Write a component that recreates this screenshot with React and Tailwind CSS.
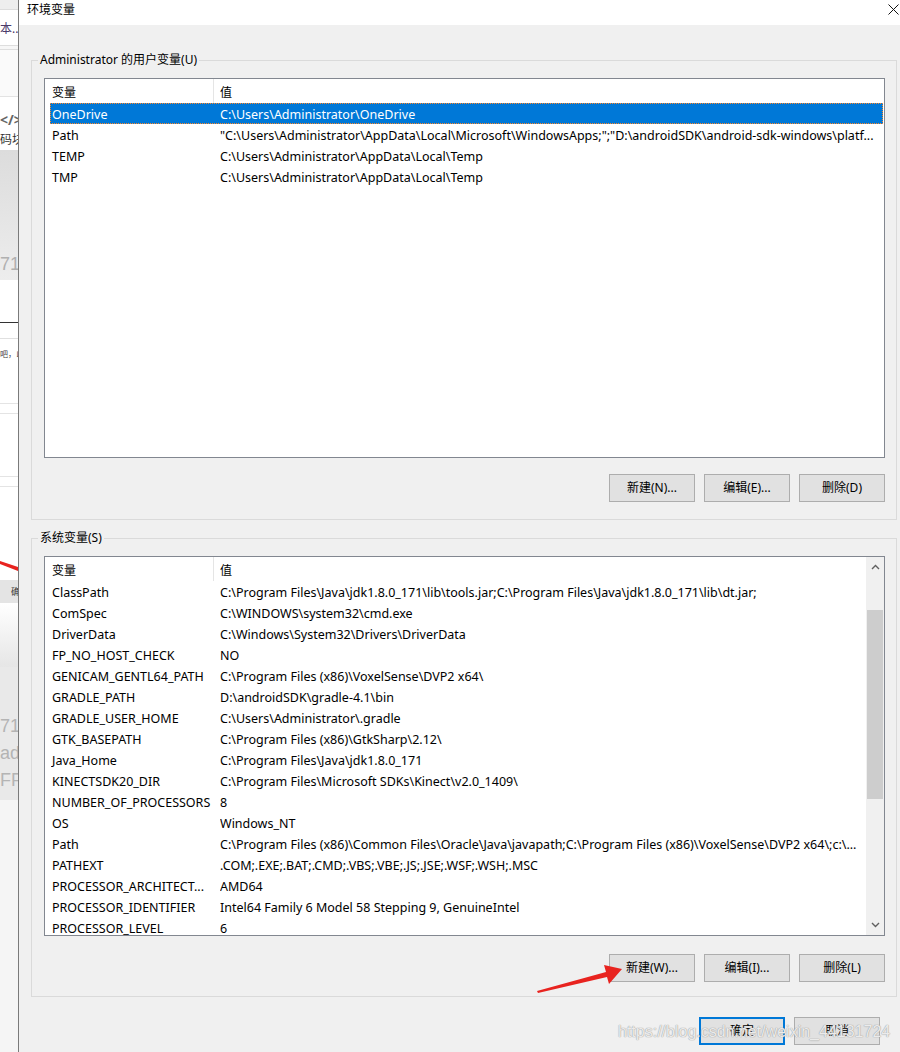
import React from "react";

const F = "font-['Segoe_UI','Noto_Sans','Noto_Sans_CJK_SC',sans-serif]";

const userVars = [
  ["OneDrive", "C:\\Users\\Administrator\\OneDrive"],
  ["Path", "\"C:\\Users\\Administrator\\AppData\\Local\\Microsoft\\WindowsApps;\";\"D:\\androidSDK\\android-sdk-windows\\platf..."],
  ["TEMP", "C:\\Users\\Administrator\\AppData\\Local\\Temp"],
  ["TMP", "C:\\Users\\Administrator\\AppData\\Local\\Temp"],
];

const sysVars = [
  ["ClassPath", "C:\\Program Files\\Java\\jdk1.8.0_171\\lib\\tools.jar;C:\\Program Files\\Java\\jdk1.8.0_171\\lib\\dt.jar;"],
  ["ComSpec", "C:\\WINDOWS\\system32\\cmd.exe"],
  ["DriverData", "C:\\Windows\\System32\\Drivers\\DriverData"],
  ["FP_NO_HOST_CHECK", "NO"],
  ["GENICAM_GENTL64_PATH", "C:\\Program Files (x86)\\VoxelSense\\DVP2 x64\\"],
  ["GRADLE_PATH", "D:\\androidSDK\\gradle-4.1\\bin"],
  ["GRADLE_USER_HOME", "C:\\Users\\Administrator\\.gradle"],
  ["GTK_BASEPATH", "C:\\Program Files (x86)\\GtkSharp\\2.12\\"],
  ["Java_Home", "C:\\Program Files\\Java\\jdk1.8.0_171"],
  ["KINECTSDK20_DIR", "C:\\Program Files\\Microsoft SDKs\\Kinect\\v2.0_1409\\"],
  ["NUMBER_OF_PROCESSORS", "8"],
  ["OS", "Windows_NT"],
  ["Path", "C:\\Program Files (x86)\\Common Files\\Oracle\\Java\\javapath;C:\\Program Files (x86)\\VoxelSense\\DVP2 x64\\;c:\\..."],
  ["PATHEXT", ".COM;.EXE;.BAT;.CMD;.VBS;.VBE;.JS;.JSE;.WSF;.WSH;.MSC"],
  ["PROCESSOR_ARCHITECT...", "AMD64"],
  ["PROCESSOR_IDENTIFIER", "Intel64 Family 6 Model 58 Stepping 9, GenuineIntel"],
  ["PROCESSOR_LEVEL", "6"],
];

function Header() {
  return (
    <div className="flex h-[24px] shrink-0 bg-white pt-[3px]">
      <div className="w-[169px] pl-[7px] flex items-center border-r border-[#e5e5e5] -mt-[3px] pt-[3px]">变量</div>
      <div className="flex-1 pl-[6px] flex items-center">值</div>
    </div>
  );
}

function Row({ name, value, selected }) {
  return (
    <div
      className={
        selected
          ? "flex h-[21px] shrink-0 items-center pt-[2px] ml-[5px] mr-[1px] bg-[#0078d7] text-white border border-dotted border-[#ff8728] text-[12.5px]"
          : "flex h-[21px] shrink-0 items-center pt-[2px] ml-[5px] mr-[1px] border border-transparent text-[12.5px]"
      }
    >
      <div className="w-[169px] pl-[1px] whitespace-nowrap overflow-hidden">{name}</div>
      <div className="flex-1 whitespace-nowrap overflow-hidden">{value}</div>
    </div>
  );
}

function Btn({ children }) {
  return (
    <div className="w-[86px] h-[28px] bg-[#e1e1e1] border border-[#adadad] flex items-center justify-center">
      {children}
    </div>
  );
}

function Chevron({ up }) {
  return (
    <svg width="9" height="6" viewBox="0 0 9 6">
      <path
        d={up ? "M1 5 L4.5 1.5 L8 5" : "M1 1 L4.5 4.5 L8 1"}
        fill="none"
        stroke="#606060"
        strokeWidth="1.4"
      />
    </svg>
  );
}

function LeftStrip() {
  return (
    <div className="w-[18px] shrink-0 flex flex-col overflow-hidden bg-[#f4f4f4] text-[12px] leading-[16px]">
      <div className="h-[10px] shrink-0 bg-[#eeeeee] border-b border-[#dddddd]" />
      <div className="h-[35px] shrink-0 bg-white flex items-center whitespace-nowrap text-[#4b3a6b] pt-[2px]">本...</div>
      <div className="h-[5px] shrink-0 border-t border-b border-[#dedede] bg-[#f7f7f7]" />
      <div className="h-[47px] shrink-0 bg-[#fafafa] border-b border-[#e3e3e3]" />
      <div className="h-[53px] shrink-0 bg-white flex flex-col whitespace-nowrap text-[#555] pt-[13px] leading-[20px]">
        <div className="font-bold text-[14px] text-[#666]">&lt;/&gt;</div>
        <div className="text-[#333]">码块</div>
      </div>
      <div className="h-[130px] shrink-0 bg-gradient-to-b from-[#dcdcdc] to-[#ededed] flex items-end pb-[8px] text-[18px] text-[#b0b0b0] whitespace-nowrap font-['Liberation_Sans',sans-serif]">71:</div>
      <div className="h-[43px] shrink-0 bg-white border-b border-[#333]" />
      <div className="h-[16px] shrink-0 bg-white border-b border-[#e0e0e0]" />
      <div className="h-[64px] shrink-0 bg-white text-[8px] leading-[10px] pt-[10px] whitespace-nowrap text-[#444]">吧，以</div>
      <div className="h-[11px] shrink-0 border-t border-b border-[#e4e4e4] bg-white" />
      <div className="h-[63px] shrink-0 bg-white border-b border-[#e4e4e4]" />
      <div className="h-[10px] shrink-0 bg-white border-b border-[#e4e4e4]" />
      <div className="h-[93px] shrink-0 bg-white" />
      <div className="h-[23px] shrink-0 bg-[#e4e4e4] text-[9px] pl-[11px] flex items-center text-[#333] whitespace-nowrap">确</div>
      <div className="h-[64px] shrink-0 bg-gradient-to-b from-white to-[#e6e6e6]" />
      <div className="h-[133px] shrink-0 bg-[#e9e9e9] text-[18px] leading-[27px] pt-[46px] text-[#b4b4b4] whitespace-nowrap font-['Liberation_Sans',sans-serif]">
        <div>71:</div>
        <div>ad</div>
        <div>FFF</div>
      </div>
      <div className="flex-1 bg-[#f5f5f5]" />
    </div>
  );
}

export default function App() {
  return (
    <div className={`w-[900px] h-[1052px] flex overflow-hidden relative bg-white text-[12px] leading-[16px] text-black ${F}`}>
      <LeftStrip />
      <div className="w-[882px] shrink-0 border-l border-[#7a7a7a] bg-[#f0f0f0] flex flex-col">
        <div className="h-[25px] shrink-0 bg-white flex items-start justify-between pl-[8px] pt-[2px]">
          <span>环境变量</span>
          <svg width="11" height="11" viewBox="0 0 11 11" className="mt-[2px] mr-[1px]">
            <path d="M0.5 0.5 L10.5 10.5 M10.5 0.5 L0.5 10.5" stroke="#111" strokeWidth="1" fill="none" />
          </svg>
        </div>

        <fieldset className="ml-[12px] mt-[27px] w-[866px] border border-[#dadada] pl-[12px] pr-[11px] pb-[17px] flex flex-col">
          <legend className="-ml-[6px] px-[2px] leading-[16px]">Administrator 的用户变量(U)</legend>
          <div className="mt-[10px] h-[380px] border border-[#828790] bg-white flex flex-col overflow-hidden">
            <Header />
            {userVars.map((r, i) => (
              <Row key={i} name={r[0]} value={r[1]} selected={i === 0} />
            ))}
          </div>
          <div className="mt-[16px] flex justify-end gap-[9px]">
            <Btn>新建(N)...</Btn>
            <Btn>编辑(E)...</Btn>
            <Btn>删除(D)</Btn>
          </div>
        </fieldset>

        <fieldset className="ml-[12px] mt-[10px] w-[866px] border border-[#dadada] pl-[12px] pr-[11px] pb-[14px] flex flex-col">
          <legend className="-ml-[6px] px-[2px] leading-[16px]">系统变量(S)</legend>
          <div className="mt-[10px] h-[380px] border border-[#828790] bg-white flex overflow-hidden">
            <div className="flex-1 flex flex-col overflow-hidden">
              <Header />
              {sysVars.map((r, i) => (
                <Row key={i} name={r[0]} value={r[1]} />
              ))}
            </div>
            <div className="w-[18px] shrink-0 bg-[#f0f0f0] flex flex-col">
              <div className="h-[20px] flex items-center justify-center pl-[1px]">
                <Chevron up />
              </div>
              <div className="h-[33px]" />
              <div className="h-[189px] mx-[1px] bg-[#cdcdcd]" />
              <div className="flex-1" />
              <div className="h-[20px] flex items-center justify-center pl-[1px]">
                <Chevron />
              </div>
            </div>
          </div>
          <div className="mt-[18px] flex justify-end gap-[9px]">
            <Btn>新建(W)...</Btn>
            <Btn>编辑(I)...</Btn>
            <Btn>删除(L)</Btn>
          </div>
        </fieldset>

        <div className="ml-[12px] w-[866px] mt-[20px] flex justify-end gap-[9px] pr-[17px]">
          <div className="w-[86px] h-[28px] bg-[#e1e1e1] border-2 border-[#0078d7] flex items-center justify-center">确定</div>
          <Btn>取消</Btn>
        </div>
      </div>

      <svg className="absolute inset-0 pointer-events-none" width="900" height="1052" viewBox="0 0 900 1052">
        <polygon points="537,991 606,972 604,965 622,969 609,984 607,977 538,993" fill="#e8231f" />
        <polygon points="0,561 18,567 18,571 0,564" fill="#e8231f" />
      </svg>

      <div className="absolute left-[618px] top-[1022px] text-[16px] leading-[20px] whitespace-nowrap font-['Liberation_Sans',sans-serif] text-white/80 [text-shadow:0_0_1px_#9a9a9a,0_0_1px_#9a9a9a] pointer-events-none">
        https://blog.csdn.net/weixin_44131724
      </div>
    </div>
  );
}
